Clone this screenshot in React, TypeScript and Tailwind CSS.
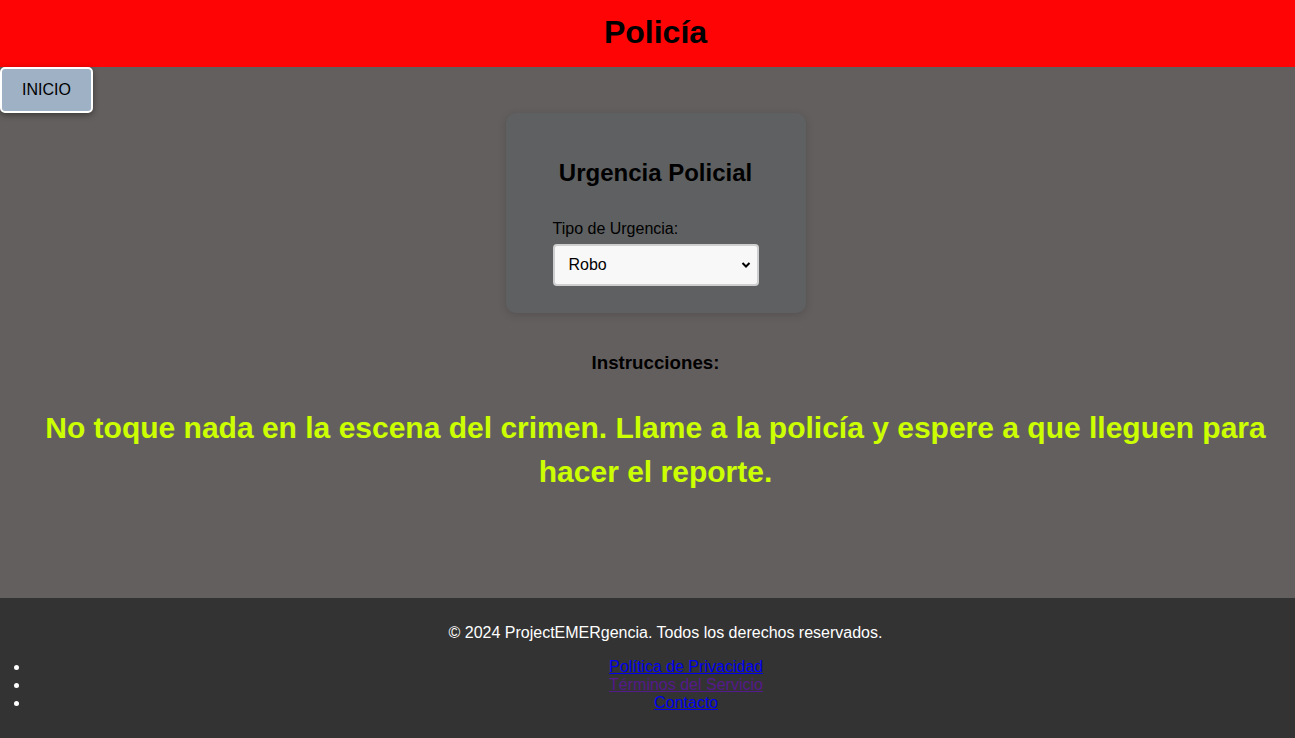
export default function App() {
  return (
    <div className="min-h-[738px] flex flex-col bg-[#645f5f] font-['Liberation_Sans',Arial,sans-serif]">
      {/* Header */}
      <header className="h-[67px] bg-[#fe0404] flex items-center justify-center pl-[16px] pb-[4px]">
        <h1 className="text-[32px] font-bold text-black">Policía</h1>
      </header>

      <main className="flex-1 flex flex-col">
        <div>
          <button className="w-[93px] h-[46px] bg-[#9fb1c5] border-2 border-white rounded-[5px] text-[16px] text-black shadow-[0_2px_6px_rgba(0,0,0,0.4)]">
            INICIO
          </button>
        </div>

        <div className="pl-[16px] flex flex-col">
          {/* Card */}
          <div className="self-center w-[300px] h-[200px] bg-[#5f6061] rounded-[10px] shadow-[0_2px_8px_rgba(0,0,0,0.15)] flex flex-col items-center pt-[46px]">
            <h2 className="text-[24px] font-bold text-black leading-[28px]">Urgencia Policial</h2>
            <div className="w-[206px] mt-[33px]">
              <label className="block text-[16px] text-black leading-[18px]">Tipo de Urgencia:</label>
              <div className="relative mt-[6px] h-[42px] bg-[#f8f8f8] border-2 border-[#cfcfcf] rounded-[4px] flex items-center pl-[14px]">
                <span className="text-[16px] text-black">Robo</span>
                <svg className="absolute right-[6px] top-[15px]" width="10" height="8" viewBox="0 0 10 8">
                  <path d="M1.5 2 L5 5.5 L8.5 2" fill="none" stroke="#000" strokeWidth="2" />
                </svg>
              </div>
            </div>
          </div>

          <h3 className="mt-[36px] text-center text-[18.72px] font-bold text-black">Instrucciones:</h3>
          <p className="mt-[29px] px-[20px] text-center text-[30px] font-bold leading-[44px] text-[#ccff00]">
            No toque nada en la escena del crimen. Llame a la policía y espere a que lleguen para hacer el reporte.
          </p>
        </div>
      </main>

      {/* Footer */}
      <footer className="h-[140px] bg-[#333333] text-white pt-[26px]">
        <p className="pl-[36px] text-center text-[16px] leading-[18px]">© 2024 ProjectEMERgencia. Todos los derechos reservados.</p>
        <ul className="mt-[16px] pl-[30px] list-disc text-[16px] leading-[18px]">
          <li className="pl-[47px] text-center">
            <a href="#" className="underline text-[#0000ee]">Política de Privacidad</a>
          </li>
          <li className="pl-[47px] text-center">
            <a href="#" className="underline text-[#551a8b]">Términos del Servicio</a>
          </li>
          <li className="pl-[47px] text-center">
            <a href="#" className="underline text-[#0000ee]">Contacto</a>
          </li>
        </ul>
      </footer>
    </div>
  );
}
